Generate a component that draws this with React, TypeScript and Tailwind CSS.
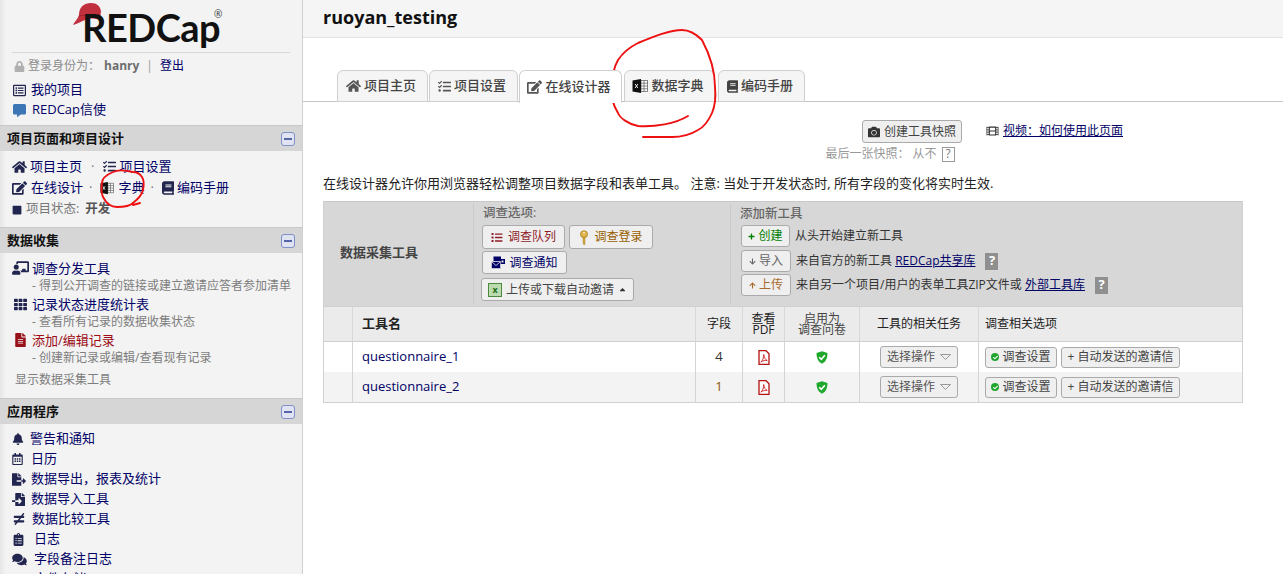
import React from "react";
import {
  FaHome, FaTasks, FaEdit, FaBook, FaList, FaFileExport, FaFileImport, FaNotEqual, FaBell, FaRegCalendarAlt, FaComments, FaCamera, FaFilm, FaLock, FaCommentAlt, FaChalkboardTeacher, FaTh, FaFileAlt, FaRegListAlt, FaSquare, FaCaretUp, FaPlus, FaArrowDown, FaArrowUp, FaCheck, FaClipboardList,
} from "react-icons/fa";

const NAVY = "text-[#000066]";

function XlsIcon({ className = "" }: { className?: string }) {
  return (
    <svg viewBox="0 0 16 14" className={className}>
      <rect x="6" y="1.5" width="9.5" height="11" fill="#fff" stroke="#666" strokeWidth="0.8" />
      <path d="M9 1.5v11M12 1.5v11M6 4.2h9.5M6 7h9.5M6 9.8h9.5" stroke="#666" strokeWidth="0.8" />
      <path d="M0.5 1.6 9 0v14l-8.5-1.6z" fill="#111" />
      <path d="M3.2 5l2.6 4M5.8 5l-2.6 4" stroke="#fff" strokeWidth="0.9" />
    </svg>
  );
}

function KeyIcon() {
  return (
    <svg viewBox="0 0 10 16" className="h-[15px] w-[10px]">
      <circle cx="5" cy="4.500" r="3.800" fill="#e0b348" stroke="#a9811f" strokeWidth="0.8" />
      <circle cx="5" cy="3" r="1" fill="#fff3c9" />
      <path d="M4 8h2v7.500H4.700L4 14.500h1V13.500H4z" fill="#d3a537" stroke="#a9811f" strokeWidth="0.5" />
    </svg>
  );
}

function NotifyIcon() {
  return (
    <svg viewBox="0 0 14 13" className="h-[13px] w-[14px]">
      <rect x="2.500" y="0.500" width="7.500" height="4.500" fill="#000066" />
      <rect x="9" y="3" width="5" height="5" fill="#000066" />
      <rect x="10.500" y="4.500" width="2" height="2" fill="#eee" />
      <rect x="0.500" y="5.500" width="9" height="7" fill="#000066" stroke="#eee" strokeWidth="0.6" />
      <path d="M1 6l4 3.500L9 6" fill="none" stroke="#eee" strokeWidth="0.8" />
    </svg>
  );
}

function SectionHeader({ title }: { title: string }) {
  return (
    <div className="flex h-[26px] items-center justify-between border-t border-[#c8c8c8] bg-[#d6d6d6] px-[7px] text-[13px] font-bold text-[#111]">
      <span>{title}</span>
      <span className="flex h-[14px] w-[14px] items-center justify-center rounded-[3px] border border-[#7f8fc9] bg-[#dfe3f2]">
        <span className="h-[2px] w-[8px] bg-[#5566a8]" />
      </span>
    </div>
  );
}

function SideLink({ icon, text, left = 12, gap = 4 }: { icon: React.ReactNode; text: string; left?: number; gap?: number }) {
  return (
    <div className={`flex h-[20px] items-center text-[13px] ${NAVY}`} style={{ paddingLeft: left, gap }}>
      <span className="flex w-[15px] justify-center text-[#22254f]">{icon}</span>
      <span>{text}</span>
    </div>
  );
}

function SurveyTool({ icon, text, note, red }: { icon: React.ReactNode; text: string; note: string; red?: boolean }) {
  return (
    <div className="flex h-[36px] pl-[9px]">
      <span className="flex h-[20px] w-[23px] items-center justify-center">{icon}</span>
      <div>
        <div className={`h-[20px] text-[13px] leading-[20px] ${red ? "text-[#9c0b14]" : NAVY}`}>{text}</div>
        <div className="h-[16px] text-[12px] leading-[15px] text-[#7d7d7d]">{note}</div>
      </div>
    </div>
  );
}

function Tab({ icon, text, w, active }: { icon: React.ReactNode; text: string; w: number; active?: boolean }) {
  return (
    <div
      className={`flex items-center justify-center gap-[3px] rounded-t-[6px] border border-[#cfcfcf] pr-[3px] text-[13px] text-[#444] ${active ? "relative z-10 -mb-px h-[33px] border-b-0 bg-white" : "h-[32px] bg-[#f5f5f5]"}`}
      style={{ width: w }}
    >
      {icon}
      <span className="font-medium">{text}</span>
    </div>
  );
}

function Btn({ children, className = "" }: { children: React.ReactNode; className?: string }) {
  return (
    <div className={`flex items-center justify-center rounded-[3px] border border-[#aaa] bg-[#efefef] text-[12px] ${className}`}>{children}</div>
  );
}

function QMark() {
  return <span className="flex h-[17px] w-[13px] items-center justify-center bg-[#8f8f8f] text-[13px] font-bold text-white">?</span>;
}

function ShieldOk() {
  return (
    <svg viewBox="0 0 12 13" className="h-[13px] w-[12px]">
      <path d="M6 0.3 11.500 2c0 5-1.500 8.700-5.500 10.700C2 10.700 0.500 7 0.500 2z" fill="#1fa82c" />
      <path d="M3.200 6.200 5.300 8.300 8.900 4.300" fill="none" stroke="#fff" strokeWidth="1.600" />
    </svg>
  );
}

function PdfIcon() {
  return (
    <svg viewBox="0 0 12 15" className="h-[15px] w-[12px]">
      <path d="M1 .7h7l3 3v10.600H1z" fill="#fff" stroke="#b51212" strokeWidth="1.300" />
      <path d="M2.800 12c2-1.200 3-4.500 2.900-7.500 .5 3 1.500 5 3.500 6-2-.3-4 0-6.400 1.500z" fill="none" stroke="#c9201f" strokeWidth="0.900" />
    </svg>
  );
}

function Row({ name, count, shade, amber }: { name: string; count: string; shade?: boolean; amber?: boolean }) {
  const cell = "flex items-center justify-center border-l border-[#d4d4d4]";
  return (
    <div className={`grid h-[30px] grid-cols-[28px_343px_47px_42px_75px_119px_1fr] ${shade ? "bg-[#f3f3f3]" : "bg-white"}`}>
      <div />
      <div className={`flex items-center border-l border-[#d4d4d4] pl-[9px] text-[13px] ${NAVY}`}>{name}</div>
      <div className={`${cell} text-[13px] ${amber ? "text-[#8a5a00]" : "text-[#333]"}`}>{count}</div>
      <div className={cell}><PdfIcon /></div>
      <div className={cell}><ShieldOk /></div>
      <div className={cell}>
        <Btn className="h-[22px] w-[78px] gap-[5px] text-[#555]">
          <span>选择操作</span>
          <svg viewBox="0 0 11 6" className="h-[6px] w-[11px]"><path d="M.5.5h10L5.500 5.500z" fill="none" stroke="#999" /></svg>
        </Btn>
      </div>
      <div className="flex items-center gap-[4px] border-l border-[#d4d4d4] pl-[6px] text-[#444]">
        <Btn className="h-[21px] w-[72px] gap-[3px]">
          <span className="flex h-[8px] w-[8px] items-center justify-center rounded-full bg-[#21a52f]"><FaCheck className="h-[5px] w-[5px] text-white" /></span>
          <span>调查设置</span>
        </Btn>
        <Btn className="h-[21px] w-[119px]">+ 自动发送的邀请信</Btn>
      </div>
    </div>
  );
}

export default function App() {
  return (
    <div className="relative flex h-[574px] w-[1283px] overflow-hidden bg-white text-[13px] text-[#222]" style={{ fontFamily: '"Open Sans","Noto Sans CJK SC",sans-serif' }}>
      {/* Sidebar */}
      <aside className="h-[574px] w-[303px] shrink-0 overflow-hidden border-r border-[#d0d0d0] bg-gradient-to-r from-[#e6e6e6] from-0% via-[#f3f3f3] via-2% to-[#f3f3f3]">
        <div className="relative mx-[12px] h-[53px] border-b border-[#d8d8d8]">
          <svg viewBox="0 0 28 23" className="absolute left-[61px] top-[3px] h-[23px] w-[28px]">
            <path d="M6 12C6 4 11 0 18 0c6 0 9 3 10 8l-1 9c-6-2-11-2-15 0-4 1.500-8 4-12 5C1 19 5 16 6 12z" fill="#c0303e" />
            <path d="M6 13c5-1 13-1 21 3" fill="none" stroke="#9e2230" strokeWidth="1" />
          </svg>
          <div className="absolute left-[70px] top-[2px] text-[38px] font-bold leading-[50px] tracking-[-0.5px] text-[#111]" style={{ fontFamily: '"Lato","Open Sans",sans-serif' }}>
            REDCap
          </div>
          <span className="absolute left-[202px] top-[9px] text-[10px] leading-none text-[#333]">®</span>
        </div>
        <div className="flex h-[24px] items-center pl-[14px] pt-[2px] text-[12px] text-[#8c8c8c]">
          <FaLock className="mr-[3px] h-[11px] w-[11px] text-[#b0b0b0]" />
          <span>{"登录身份为\uFF1A"}</span>
          <span className="ml-[4px] font-bold text-[#6d6d6d]">hanry</span>
          <span className="mx-[7px] text-[#999]">|</span>
          <span className={`text-[12px] ${NAVY}`}>登出</span>
        </div>
        <div className="pb-[5px] pt-[3px]">
          <SideLink icon={<FaRegListAlt className="h-[13px] w-[13px]" />} text="我的项目" />
          <SideLink icon={<FaCommentAlt className="h-[13px] w-[13px] text-[#3c76b4]" />} text="REDCap信使" gap={5} />
        </div>

        <SectionHeader title="项目页面和项目设计" />
        <div className="h-[76px] pl-[12px] pt-[5px] text-[13px]">
          <div className={`flex h-[21px] items-center ${NAVY}`}>
            <FaHome className="mr-[3px] h-[14px] w-[15px] text-[#22254f]" />
            <span>项目主页</span>
            <span className="mx-[9px] text-[#777]">·</span>
            <FaTasks className="mr-[3px] h-[13px] w-[13px] text-[#22254f]" />
            <span>项目设置</span>
          </div>
          <div className={`flex h-[21px] items-center ${NAVY}`}>
            <FaEdit className="mr-[4px] h-[14px] w-[15px] text-[#22254f]" />
            <span>在线设计</span>
            <span className="ml-[6px] mr-[8px] text-[#777]">·</span>
            <XlsIcon className="mr-[4px] h-[14px] w-[14px]" />
            <span>字典</span>
            <span className="ml-[6px] mr-[8px] text-[#777]">·</span>
            <FaBook className="mr-[3px] h-[14px] w-[12px] text-[#22254f]" />
            <span>编码手册</span>
          </div>
          <div className="flex h-[23px] items-center text-[12.5px] text-[#777]">
            <FaSquare className="mr-[4px] h-[10px] w-[10px] text-[#22254f]" />
            <span>项目状态:</span>
            <span className="ml-[6px] font-bold text-[#555]">开发</span>
          </div>
        </div>

        <SectionHeader title="数据收集" />
        <div className="h-[145px] pt-[5px]">
          <SurveyTool icon={<FaChalkboardTeacher className="h-[14px] w-[17px] text-[#22254f]" />} text="调查分发工具" note="- 得到公开调查的链接或建立邀请应答者参加清单" />
          <SurveyTool icon={<FaTh className="h-[13px] w-[13px] text-[#22254f]" />} text="记录状态进度统计表" note="- 查看所有记录的数据收集状态" />
          <SurveyTool icon={<FaFileAlt className="h-[14px] w-[11px] text-[#97101a]" />} text="添加/编辑记录" note="- 创建新记录或编辑/查看现有记录" red />
          <div className="mt-[2px] flex h-[24px] items-center pl-[15px] text-[12px] text-[#7d7d7d]">显示数据采集工具</div>
        </div>

        <SectionHeader title="应用程序" />
        <div className="pt-[5px]">
          <SideLink icon={<FaBell className="h-[12px] w-[12px]" />} text="警告和通知" left={10} gap={5} />
          <SideLink icon={<FaRegCalendarAlt className="h-[12px] w-[11px]" />} text="日历" left={10} gap={6} />
          <SideLink icon={<FaFileExport className="h-[13px] w-[14px]" />} text={"数据导出\uFF0C报表及统计"} left={11} gap={5} />
          <SideLink icon={<FaFileImport className="h-[13px] w-[15px]" />} text="数据导入工具" left={11} gap={5} />
          <SideLink icon={<FaNotEqual className="h-[12px] w-[12px]" />} text="数据比较工具" left={11} gap={6} />
          <SideLink icon={<FaClipboardList className="h-[13px] w-[11px]" />} text="日志" left={11} gap={8} />
          <SideLink icon={<FaComments className="h-[13px] w-[15px]" />} text="字段备注日志" left={12} gap={7} />
          <SideLink icon={<FaList className="h-[12px] w-[12px]" />} text="文件存储" left={12} gap={7} />
        </div>
      </aside>

      {/* Main */}
      <main className="min-w-0 flex-1">
        <div className="flex h-[38px] items-center border-b border-[#e2e2e2] bg-[#f5f5f5] pb-[2px] pl-[20px] text-[18px] font-bold text-[#111]">ruoyan_testing</div>

        <div className="mt-[32px] flex h-[32px] gap-[1px] border-b border-[#c4c4c4] pl-[34px]">
          <Tab w={91} text="项目主页" icon={<FaHome className="h-[14px] w-[15px] text-[#555]" />} />
          <Tab w={89} text="项目设置" icon={<FaTasks className="h-[13px] w-[13px] text-[#555]" />} />
          <Tab w={103} active text="在线设计器" icon={<FaEdit className="h-[14px] w-[15px] text-[#555]" />} />
          <div className="w-0" />
          <Tab w={91} text="数据字典" icon={<XlsIcon className="h-[14px] w-[16px]" />} />
          <div className="w-px" />
          <Tab w={87} text="编码手册" icon={<FaBook className="h-[13px] w-[11px] text-[#444]" />} />
        </div>

        <div className="flex h-[67px] pt-[18px]">
          <div className="ml-[540px] flex w-[138px] flex-col items-center">
            <Btn className="h-[23px] w-[100px] gap-[4px] text-[#444]">
              <FaCamera className="h-[12px] w-[12px] text-[#333]" />
              <span>创建工具快照</span>
            </Btn>
            <div className="-ml-[44px] mt-[2px] flex h-[18px] items-center gap-[3px] text-[12px] text-[#999]">
              <span className="whitespace-nowrap">{"最后一张快照\uFF1A"}</span>
              <span className="flex items-center gap-[5px] whitespace-nowrap">从不<span className="flex h-[15px] w-[13px] items-center justify-center border border-[#999] text-[12px] leading-none text-[#777]">?</span></span>
            </div>
          </div>
          <div className={`ml-[5px] flex h-[22px] items-center gap-[4px] text-[12px] ${NAVY}`}>
            <FaFilm className="h-[12px] w-[13px] text-[#333]" />
            <span className="underline">{"视频\uFF1A如何使用此页面"}</span>
          </div>
        </div>

        <div className="ml-[20px] h-[32px] pt-[5px] text-[13px] leading-[18px] text-[#222]">在线设计器允许你用浏览器轻松调整项目数据字段和表单工具。 注意: 当处于开发状态时, 所有字段的变化将实时生效.</div>

        <div className="ml-[20px] w-[920px] border-x border-b border-[#d0d0d0]">
          {/* Panel */}
          <div className="flex h-[105px] border-t border-[#c8c8c8] bg-[#d7d7d7]">
            <div className="flex w-[149px] items-center pb-[3px] pl-[16px] text-[13px] font-bold text-[#444]">数据采集工具</div>
            <div className="my-[2px] w-[258px] border-x border-[#cacaca] pl-[7px] pt-[1px]">
              <div className="flex h-[17px] items-center pl-[2px] text-[12.5px] font-medium text-[#666]">调查选项:</div>
              <div className="mt-[3px] flex gap-[4px] pl-[1px]">
                <Btn className="h-[24px] w-[83px] gap-[5px] text-[#8f1d2a]"><FaList className="h-[11px] w-[12px]" /><span>调查队列</span></Btn>
                <Btn className="h-[24px] w-[84px] gap-[5px] text-[#996000]"><KeyIcon /><span>调查登录</span></Btn>
              </div>
              <Btn className="ml-[1px] mt-[2px] h-[23px] w-[85px] gap-[4px] text-[#000066]"><NotifyIcon /><span>调查通知</span></Btn>
              <Btn className="mt-[4px] h-[23px] w-[153px] gap-[4px] text-[#444]">
                <span className="flex h-[14px] w-[14px] items-center justify-center border border-[#4a8a3f] bg-[#bcdcb0] text-[9px] font-bold leading-none text-[#1d6f22]">x</span>
                <span>上传或下载自动邀请</span>
                <FaCaretUp className="h-[9px] w-[9px] text-[#333]" />
              </Btn>
            </div>
            <div className="pl-[10px] pt-[4px]">
              <div className="-ml-px flex h-[17px] items-center text-[12.5px] font-medium text-[#666]">添加新工具</div>
              <div className="mt-[2px] flex h-[22px] items-center gap-[5px]">
                <Btn className="h-[22px] w-[49px] gap-[3px] text-[#008000]"><FaPlus className="h-[7px] w-[7px]" /><span>创建</span></Btn>
                <span className="text-[12px] text-[#333]">从头开始建立新工具</span>
              </div>
              <div className="mt-[3px] flex h-[22px] items-center gap-[5px]">
                <Btn className="h-[22px] w-[50px] gap-[3px] text-[#666]"><FaArrowDown className="h-[7px] w-[7px]" /><span>导入</span></Btn>
                <span className="text-[12px] text-[#333]">来自官方的新工具 <span className={`underline ${NAVY}`}>REDCap共享库</span></span>
                <span className="ml-[5px]"><QMark /></span>
              </div>
              <div className="mt-[2px] flex h-[22px] items-center gap-[5px]">
                <Btn className="h-[22px] w-[50px] gap-[3px] text-[#a9682c]"><FaArrowUp className="h-[7px] w-[7px]" /><span>上传</span></Btn>
                <span className="text-[12px] text-[#333]">来自另一个项目/用户的表单工具ZIP文件或 <span className={`underline ${NAVY}`}>外部工具库</span></span>
                <span className="ml-[5px]"><QMark /></span>
              </div>
            </div>
          </div>

          {/* Table header */}
          <div className="grid h-[36px] grid-cols-[28px_343px_47px_42px_75px_119px_1fr] border-y border-[#cfcfcf] bg-[#ebebeb] text-[#222]">
            <div />
            <div className="flex items-center border-l border-[#d8d8d8] pl-[9px] text-[13px] font-bold">工具名</div>
            <div className="flex items-center justify-center border-l border-[#d8d8d8] text-[12px]">字段</div>
            <div className="flex flex-col items-center justify-center border-l border-[#d8d8d8] text-[12px] leading-[11px]"><span>查看</span><span>PDF</span></div>
            <div className="flex flex-col items-center justify-center border-l border-[#d8d8d8] text-[12px] leading-[11px] text-[#444]"><span>启用为</span><span>调查问卷</span></div>
            <div className="flex items-center justify-center border-l border-[#d8d8d8] text-[12px]">工具的相关任务</div>
            <div className="flex items-center border-l border-[#d8d8d8] pl-[6px] text-[12px]">调查相关选项</div>
          </div>
          <Row name="questionnaire_1" count="4" />
          <Row name="questionnaire_2" count="1" shade amber />
        </div>
      </main>

      {/* Hand-drawn annotation overlays */}
      <svg className="pointer-events-none absolute left-0 top-0 h-[574px] w-[1283px]" viewBox="0 0 1283 574" fill="none" stroke="#ee1111" strokeWidth="1.900" strokeLinecap="round">
        <path d="M688 116C675 124 655 127 638 126C628 124 620 118 618 113C613 105 611 95 612 87C612 75 614 67 618 60C624 51 630 47 638 43C655 36 670 30 682 30C690 30 697 35 702 40C710 55 715 70 715 87C716 97 715 106 712 113C708 122 704 127 698 130C690 135 682 137 672 137L643 137" />
        <path d="M133 172C125 170 117 170 113 172C106 175 102 178 102 183C101 189 101 193 103 197C106 203 111 207 117 207C124 207 130 206 133 203C138 199 142 195 143 190C144 185 144 180 142 177C140 174 137 172 133 172M133 205L140 203" />
      </svg>
    </div>
  );
}
